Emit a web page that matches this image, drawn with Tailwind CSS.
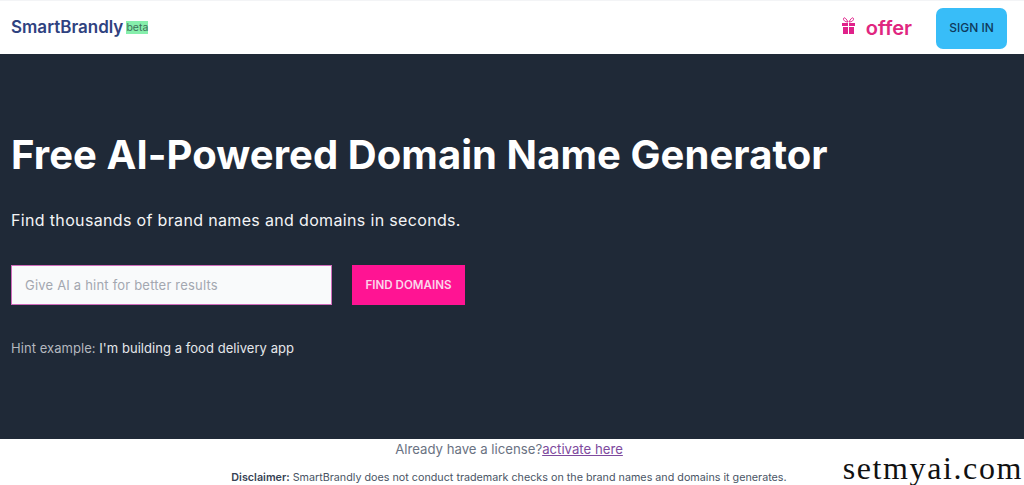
<!DOCTYPE html>
<html lang="en">
<head>
  <meta charset="UTF-8" />
  <meta name="viewport" content="width=device-width, initial-scale=1.0" />
  <title>SmartBrandly</title>
  <script src="https://cdn.jsdelivr.net/npm/@tailwindcss/browser@4"></script>
</head>
<body class="bg-white font-[Inter,sans-serif] h-[485px] overflow-hidden relative">
  <header class="h-[54px] flex items-center justify-between pl-[11px] pr-[17px] pt-[1px] border-t border-gray-100">
    <div class="flex items-center gap-[3px]">
      <span class="text-[17px] font-semibold text-[#2f4280]">SmartBrandly</span>
      <span class="text-[10.5px] leading-[13px] bg-[#86efac] text-[#3f6f5a] mb-[1px]">beta</span>
    </div>
    <div class="flex items-center">
      <svg class="w-[15px] h-[18px] mb-[5px] text-[#e0218a]" viewBox="0 0 15 18" fill="currentColor">
        <path d="M1 6h6v3H1zM8 6h6v3H8zM2 10h5v7H2zM8 10h5v7H8z"/>
        <path d="M7 5C5 1 3 0 2.5 1.5S4 5 7 5zM8 5c2-4 4-5 4.500-3.500S11 5 8 5z" fill="none" stroke="currentColor" stroke-width="1"/>
      </svg>
      <span class="ml-[10px] mr-[24px] text-[20px] font-semibold text-[#e0267f]">offer</span>
      <button class="w-[71px] h-[41px] rounded-[7px] bg-[#38bdf8] text-[12px] font-medium text-[#0f3a5c]">SIGN IN</button>
    </div>
  </header>

  <main class="h-[385px] bg-[#1f2937] pl-[11px] pt-[76px]">
    <h1 class="text-[40px] leading-[50px] font-bold tracking-[0.07px] text-white">Free AI-Powered Domain Name Generator</h1>
    <p class="mt-[27px] text-[16px] leading-[26px] tracking-[0.34px] text-gray-100">Find thousands of brand names and domains in seconds.</p>
    <form class="mt-[32px] flex gap-[20px]">
      <input class="w-[321px] h-[40px] px-[13px] pb-[1px] bg-[#f9fafb] border border-[#d06cbc] text-[13px] tracking-[0.2px] placeholder:text-[#a3a7b0]" placeholder="Give AI a hint for better results" />
      <button type="button" class="w-[113px] h-[40px] pt-[1px] bg-[#ff1493] text-[11.6px] font-semibold text-[#fbd5ea]">FIND DOMAINS</button>
    </form>
    <p class="mt-[33px] text-[13px] leading-[20px] tracking-[0.05px] text-[#b4b8bf]">Hint example: <span class="text-gray-200">I'm building a food delivery app</span></p>
  </main>

  <footer class="text-center pr-[6px]">
    <p class="text-[13.2px] leading-[20px] text-gray-500">Already have a license?<a href="#" class="underline text-[#7e4a9e]">activate here</a></p>
    <p class="mt-[11px] text-[10.75px] leading-[16px] text-gray-600"><b class="font-semibold text-gray-700">Disclaimer:</b> SmartBrandly does not conduct trademark checks on the brand names and domains it generates.</p>
  </footer>

  <div class="absolute right-0 bottom-[1px] font-['Liberation_Serif',serif] text-[32px] leading-[32px] tracking-[1.6px] text-[#111] pr-[1px]">setmyai.com</div>
</body>
</html>
